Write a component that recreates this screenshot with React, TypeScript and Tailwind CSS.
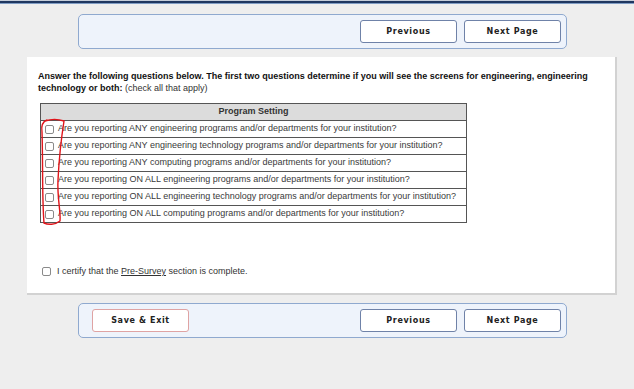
import React from "react";

const questions = [
  "Are you reporting ANY engineering programs and/or departments for your institution?",
  "Are you reporting ANY engineering technology programs and/or departments for your institution?",
  "Are you reporting ANY computing programs and/or departments for your institution?",
  "Are you reporting ON ALL engineering programs and/or departments for your institution?",
  "Are you reporting ON ALL engineering technology programs and/or departments for your institution?",
  "Are you reporting ON ALL computing programs and/or departments for your institution?",
];

const Box: React.FC = () => (
  <span className="inline-block w-[9px] h-[9px] border border-[#8a8a8a] rounded-[2px] bg-white shrink-0" />
);

const NavButton: React.FC<{ label: string; danger?: boolean }> = ({ label, danger }) => (
  <button
    className={
      "w-[97px] h-[23px] bg-white rounded-[3px] border text-[8px] font-bold tracking-[0.08em] text-[#222] " +
      (danger ? "border-[#dfa3a3]" : "border-[#6f82a8]")
    }
    style={{ fontFamily: '"DejaVu Sans", Verdana, sans-serif' }}
  >
    {label}
  </button>
);

const NavBar: React.FC<{ showSave?: boolean }> = ({ showSave }) => (
  <div className="ml-[78px] w-[489px] h-[35px] rounded-[5px] border border-[#8fa9cf] bg-[#eef3fb] flex items-center pl-[13px] pr-[5px]">
    {showSave && <NavButton label="Save & Exit" danger />}
    <div className="ml-auto flex gap-[7px]">
      <NavButton label="Previous" />
      <NavButton label="Next Page" />
    </div>
  </div>
);

const App: React.FC = () => {
  return (
    <div
      className="relative w-[634px] h-[389px] bg-[#eeeeee] overflow-hidden"
      style={{ fontFamily: '"Liberation Sans", Arial, sans-serif' }}
    >
      <div className="h-[1px] bg-[#c5cdd9]" />
      <div className="h-[2px] bg-[#1f3760]" />
      <div className="h-[1px] bg-[#7f9cc4]" />

      <div className="pt-[10px]">
        <NavBar />
      </div>

      <div className="mt-[8px] ml-[27px] w-[590px] h-[238px] bg-white border-r-2 border-b-2 border-[#d2d2d2] pl-[11px] pt-[13px]">
        <p className="text-[9px] font-bold text-[#111] leading-[12px] whitespace-nowrap">
          Answer the following questions below. The first two questions determine if you will see the screens for engineering, engineering
          <br />
          technology or both: <span className="font-normal text-[#333]">(check all that apply)</span>
        </p>

        <table className="mt-[9px] ml-[2px] w-[427px] border-collapse text-[9px] text-[#3a3a3a]">
          <thead>
            <tr>
              <th className="h-[17px] p-0 bg-[#dcdcdc] border border-[#555] font-bold text-[#333] text-center">
                Program Setting
              </th>
            </tr>
          </thead>
          <tbody>
            {questions.map((q) => (
              <tr key={q}>
                <td className="h-[17px] border border-[#555] p-0">
                  <div className="flex items-center gap-[4px] pl-[4px] whitespace-nowrap">
                    <Box />
                    <span>{q}</span>
                  </div>
                </td>
              </tr>
            ))}
          </tbody>
        </table>

        <div className="mt-[42px] flex items-center gap-[6px] pl-[4px] text-[9px] text-[#333]">
          <Box />
          <span>
            I certify that the <span className="underline">Pre-Survey</span> section is complete.
          </span>
        </div>
      </div>

      <div className="pt-[8px]">
        <NavBar showSave />
      </div>

      <svg className="absolute left-0 top-0 pointer-events-none" width="634" height="389">
        <path
          d="M45 121 C51 119, 58 119, 64 121 C61 140, 59 160, 58 180 C57 198, 61 212, 60 221 C55 225, 48 225, 44 223 C42 200, 43 160, 42 132 C41 126, 42 122, 47 120"
          fill="none"
          stroke="#e0141a"
          strokeWidth="1.4"
          strokeLinecap="round"
        />
      </svg>
    </div>
  );
};

export default App;
